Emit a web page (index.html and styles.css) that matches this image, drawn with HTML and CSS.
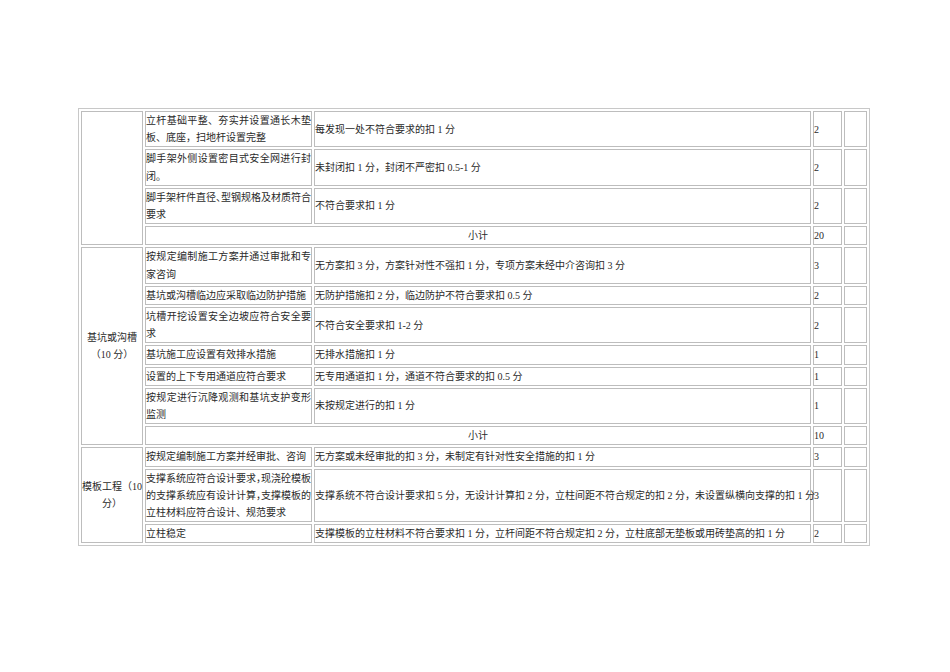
FILE: index.html
```html
<!DOCTYPE html>
<html lang="zh-CN">
<head>
<meta charset="utf-8">
<title>检查评分表</title>
<link rel="stylesheet" href="styles.css">
</head>
<body>
<div class="page">
<table class="score">
  <tr>
    <td class="c1" rowspan="4"></td>
    <td class="c2">立杆基础平整、夯实并设置通长木垫板、底座，扫地杆设置完整</td>
    <td class="c3">每发现一处不符合要求的扣 1 分</td>
    <td class="c4">2</td>
    <td class="c5"></td>
  </tr>
  <tr>
    <td class="c2">脚手架外侧设置密目式安全网进行封闭。</td>
    <td class="c3">未封闭扣 1 分，封闭不严密扣 0.5-1 分</td>
    <td class="c4">2</td>
    <td class="c5"></td>
  </tr>
  <tr>
    <td class="c2">脚手架杆件直径<span class="half">、</span>型钢规格及材质符合要求</td>
    <td class="c3">不符合要求扣 1 分</td>
    <td class="c4">2</td>
    <td class="c5"></td>
  </tr>
  <tr>
    <td class="sum" colspan="2">小计</td>
    <td class="c4">20</td>
    <td class="c5"></td>
  </tr>

  <tr>
    <td class="c1" rowspan="7">基坑或沟槽（10 分）</td>
    <td class="c2">按规定编制施工方案并通过审批和专家咨询</td>
    <td class="c3">无方案扣 3 分，方案针对性不强扣 1 分，专项方案未经中介咨询扣 3 分</td>
    <td class="c4">3</td>
    <td class="c5"></td>
  </tr>
  <tr>
    <td class="c2">基坑或沟槽临边应采取临边防护措施</td>
    <td class="c3">无防护措施扣 2 分，临边防护不符合要求扣 0.5 分</td>
    <td class="c4">2</td>
    <td class="c5"></td>
  </tr>
  <tr>
    <td class="c2">坑槽开挖设置安全边坡应符合安全要求</td>
    <td class="c3">不符合安全要求扣 1-2 分</td>
    <td class="c4">2</td>
    <td class="c5"></td>
  </tr>
  <tr>
    <td class="c2">基坑施工应设置有效排水措施</td>
    <td class="c3">无排水措施扣 1 分</td>
    <td class="c4">1</td>
    <td class="c5"></td>
  </tr>
  <tr>
    <td class="c2">设置的上下专用通道应符合要求</td>
    <td class="c3">无专用通道扣 1 分，通道不符合要求的扣 0.5 分</td>
    <td class="c4">1</td>
    <td class="c5"></td>
  </tr>
  <tr>
    <td class="c2">按规定进行沉降观测和基坑支护变形监测</td>
    <td class="c3">未按规定进行的扣 1 分</td>
    <td class="c4">1</td>
    <td class="c5"></td>
  </tr>
  <tr>
    <td class="sum" colspan="2">小计</td>
    <td class="c4">10</td>
    <td class="c5"></td>
  </tr>

  <tr>
    <td class="c1" rowspan="3">模板工程（10 分）</td>
    <td class="c2">按规定编制施工方案并经审批、咨询</td>
    <td class="c3">无方案或未经审批的扣 3 分，未制定有针对性安全措施的扣 1 分</td>
    <td class="c4">3</td>
    <td class="c5"></td>
  </tr>
  <tr>
    <td class="c2">支撑系统应符合设计要求<span class="half">，</span>现浇砼模板的支撑系统应有设计计算<span class="half">，</span>支撑模板的立柱材料应符合设计、规范要求</td>
    <td class="c3">支撑系统不符合设计要求扣 5 分，无设计计算扣 2 分，立柱间距不符合规定的扣 2 分，未设置纵横向支撑的扣 1 分</td>
    <td class="c4">3</td>
    <td class="c5"></td>
  </tr>
  <tr>
    <td class="c2">立柱稳定</td>
    <td class="c3">支撑模板的立柱材料不符合要求扣 1 分，立杆间距不符合规定扣 2 分，立柱底部无垫板或用砖垫高的扣 1 分</td>
    <td class="c4">2</td>
    <td class="c5"></td>
  </tr>
</table>
</div>
</body>
</html>
```

FILE: styles.css
```css
html, body {
  margin: 0;
  padding: 0;
  background: #ffffff;
}

.page {
  padding: 108px 0 0 78px;
}

.score {
  table-layout: fixed;
  width: 792px;
  border-collapse: separate;
  border-spacing: 2px;
  border: 1px solid #c8c8c8;
  font-family: "Liberation Serif", "Noto Sans CJK SC", serif;
  font-size: 10px;
  line-height: 17.2px;
  color: #2a2a2a;
}

.score td {
  border: 1px solid #bdbdbd;
  padding: 0;
  vertical-align: middle;
  text-align: left;
}

.c1 {
  width: 60px;
  text-align: center !important;
}

.c2 {
  width: 165px;
  text-align: justify !important;
}

.c3 {
  width: 495px;
  white-space: nowrap;
}

.c4 {
  width: 27px;
}

.c5 {
  width: 21px;
}

.sum {
  text-align: center !important;
}

.half {
  font-feature-settings: "halt" 1;
}
```
